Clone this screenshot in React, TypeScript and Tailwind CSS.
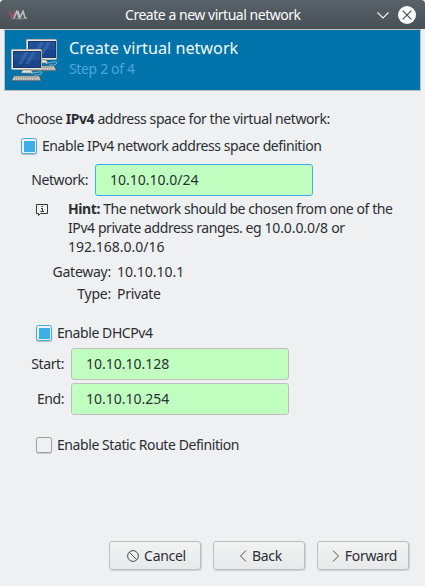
import React from "react";

function Computer() {
  return (
    <g>
      <rect x="0.5" y="0.5" width="30" height="20" rx="1" fill="#e9e8e2" stroke="#b3b1a8" />
      <rect x="2.5" y="2.5" width="27" height="16" fill="#214f96" stroke="#1b3769" />
      <path d="M3 11 H29 V18 H3 Z" fill="#10397f" opacity="0.45" />
      <path d="M14 3 H18 L11 15 H7 Z M21 3 H25 L18 15 H14 Z" fill="#5580bd" opacity="0.4" />
      <path d="M12 21 H20 L22 24 H10 Z" fill="#e0dfd9" stroke="#85847e" strokeWidth="0.6" />
      <path d="M20 24.5 q12 -3 11 -0.5 t-8 2" fill="none" stroke="#7fb6d2" strokeWidth="1" />
      <path d="M3 27 H28 L30 31.5 H1 Z" fill="#d8d7d1" stroke="#6c6b67" strokeWidth="0.8" />
      <path d="M4 28.6 H27 M3.5 30.2 H28" stroke="#777" strokeWidth="0.8" strokeDasharray="1.6 0.7" />
    </g>
  );
}

function Check({ checked, children }: { checked?: boolean; children: React.ReactNode }) {
  return (
    <div className="flex h-[18px] items-center gap-[5px]">
      <span
        className={
          checked
            ? "flex size-4 items-center justify-center rounded-[2.5px] border border-[#3daee9] bg-[#eff0f1] shadow-[0_1px_1px_#b8bbbd]"
            : "flex size-4 items-center justify-center rounded-[2.5px] border border-[#9b9d9f] bg-[#eff0f1] shadow-[0_1px_1px_#c8cacc]"
        }
      >
        {checked && <span className="size-[11px] bg-[#3daee9]" />}
      </span>
      <span className="pb-[2px]">{children}</span>
    </div>
  );
}

function Field({ value, active }: { value: string; active?: boolean }) {
  return (
    <div
      className={
        active
          ? "flex h-8 w-[218px] items-center rounded-[3px] border border-[#3daee9] bg-[#c0ffc0] pb-[2px] pl-[14px] tracking-normal"
          : "flex h-8 w-[218px] items-center rounded-[3px] border border-[#bcbebf] bg-[#c0ffc0] pb-[2px] pl-[14px] tracking-normal"
      }
    >
      {value}
    </div>
  );
}

function Button({ icon, children }: { icon: React.ReactNode; children: React.ReactNode }) {
  return (
    <div className="flex h-[29px] w-[92px] items-center justify-center gap-[5px] rounded-[3px] border border-[#bcbebf] bg-linear-to-b from-[#f1f2f2] to-[#e8e9ea] pl-[3px] tracking-[-0.3px] shadow-[1px_1px_1px_#d0d2d4]">
      {icon}
      <span>{children}</span>
    </div>
  );
}

export default function App() {
  return (
    <div className="flex h-[586px] w-[425px] flex-col overflow-hidden bg-[#eff0f1] font-['Noto_Sans',sans-serif] text-[14px] leading-[19px] tracking-[-0.42px] whitespace-nowrap text-[#2b2f34]">
      <header className="flex h-[29px] shrink-0 items-center rounded-t-[4px] bg-linear-to-b from-[#596269] to-[#475057] text-[#fcfcfc]">
        <svg className="ml-2 shrink-0" width="20" height="10" viewBox="0 0 20 10" fill="none" strokeWidth="1.8">
          <path d="M1 1 L4 7.5 L7 1" stroke="#9c5361" />
          <path d="M6 8 L9 1 L11 8 M10 1 L12 8 L15 1 L17 8 H19" stroke="#b8bcbe" strokeWidth="1.6" />
          <path d="M4 8.7 H19" stroke="#8b9195" strokeWidth="1" />
        </svg>
        <span className="ml-[97px] w-[251px] pb-px tracking-[-0.47px]">Create a new virtual network</span>
        <svg className="shrink-0" width="40" height="20" viewBox="376 4 40 20" fill="none">
          <path d="M377.5 11.5 L383 17 L388.5 11.5" stroke="#fcfcfc" strokeWidth="1.1" />
          <circle cx="407" cy="14" r="9" fill="#fcfcfc" />
          <path d="M402.7 9.7 L411.3 18.3 M411.3 9.7 L402.7 18.3" stroke="#475057" strokeWidth="1.2" />
        </svg>
      </header>

      <section className="ml-1 flex h-[62px] w-[417px] shrink-0 border border-[#bcbebf] bg-[#0073aa]">
        <svg className="mt-[9px] ml-[6px] shrink-0" width="48" height="44" viewBox="0 0 48 44">
          <g transform="translate(15 0)"><Computer /></g>
          <g transform="translate(0 10)"><Computer /></g>
        </svg>
        <div className="pt-[7px] pl-[10px]">
          <div className="text-[16.2px] leading-[22px] tracking-normal text-[#f4f9fc]">Create virtual network</div>
          <div className="text-[#4ba6d8] leading-[20px] tracking-[-0.35px]">Step 2 of 4</div>
        </div>
      </section>

      <main className="flex flex-1 flex-col pt-[18px]">
        <p className="pl-4">
          Choose <b>IPv4</b> address space for the virtual network:
        </p>
        <div className="mt-[9px] pl-[21px]"><Check checked>Enable IPv4 network address space definition</Check></div>
        <div className="mt-[9px] flex items-center">
          <span className="w-[88px] pb-[2px] text-right">Network:</span>
          <div className="ml-[7px]"><Field value="10.10.10.0/24" active /></div>
        </div>
        <div className="mt-[3px] flex">
          <svg className="mt-[5px] ml-[36px] shrink-0" width="12" height="12" viewBox="0 0 12 12" fill="none" stroke="#31363b">
            <path d="M2.5 9.5 H0.5 V0.5 H11.5 V9.5 H4.5 L2.5 11.5 Z" />
            <path d="M5 4.5 H6.5 V7.5 M4.5 7.5 H8 M5.5 2.5 H7" />
          </svg>
          <p className="ml-[20px]">
            <b>Hint:</b> The network should be chosen from one of the<br />
            IPv4 private address ranges. eg <span className="tracking-[-0.1px]">10.0.0.0/8</span> or<br />
            <span className="tracking-normal">192.168.0.0/16</span>
          </p>
        </div>
        <div className="mt-[6px] grid grid-cols-[111px_auto] gap-x-[6px] gap-y-[3px]">
          <span className="text-right tracking-[-0.25px]">Gateway:</span><span className="tracking-normal">10.10.10.1</span>
          <span className="text-right tracking-[-0.25px]">Type:</span><span className="tracking-[-0.3px]">Private</span>
        </div>
        <div className="mt-[21px] pl-[36px]"><Check checked>Enable DHCPv4</Check></div>
        <div className="mt-[6px] grid grid-cols-[64px_218px] items-center gap-x-[7px] gap-y-[3px]">
          <span className="pb-[2px] text-right">Start:</span><Field value="10.10.10.128" />
          <span className="pb-[2px] text-right">End:</span><Field value="10.10.10.254" />
        </div>
        <div className="mt-[21px] pl-[36px]"><Check>Enable Static Route Definition</Check></div>
        <footer className="mt-auto mb-[16px] flex gap-3 pl-[109px]">
          <Button icon={<svg width="12" height="12" viewBox="0 0 12 12" fill="none" stroke="#4d5257"><circle cx="6" cy="6" r="5.4" /><path d="M2.2 2.2 L9.8 9.8" /></svg>}>Cancel</Button>
          <Button icon={<svg width="8" height="12" viewBox="0 0 8 12" fill="none" stroke="#4d5257"><path d="M7 0.5 L1.5 6 L7 11.5" /></svg>}>Back</Button>
          <Button icon={<svg width="8" height="12" viewBox="0 0 8 12" fill="none" stroke="#4d5257"><path d="M1 0.5 L6.5 6 L1 11.5" /></svg>}>Forward</Button>
        </footer>
      </main>
    </div>
  );
}
